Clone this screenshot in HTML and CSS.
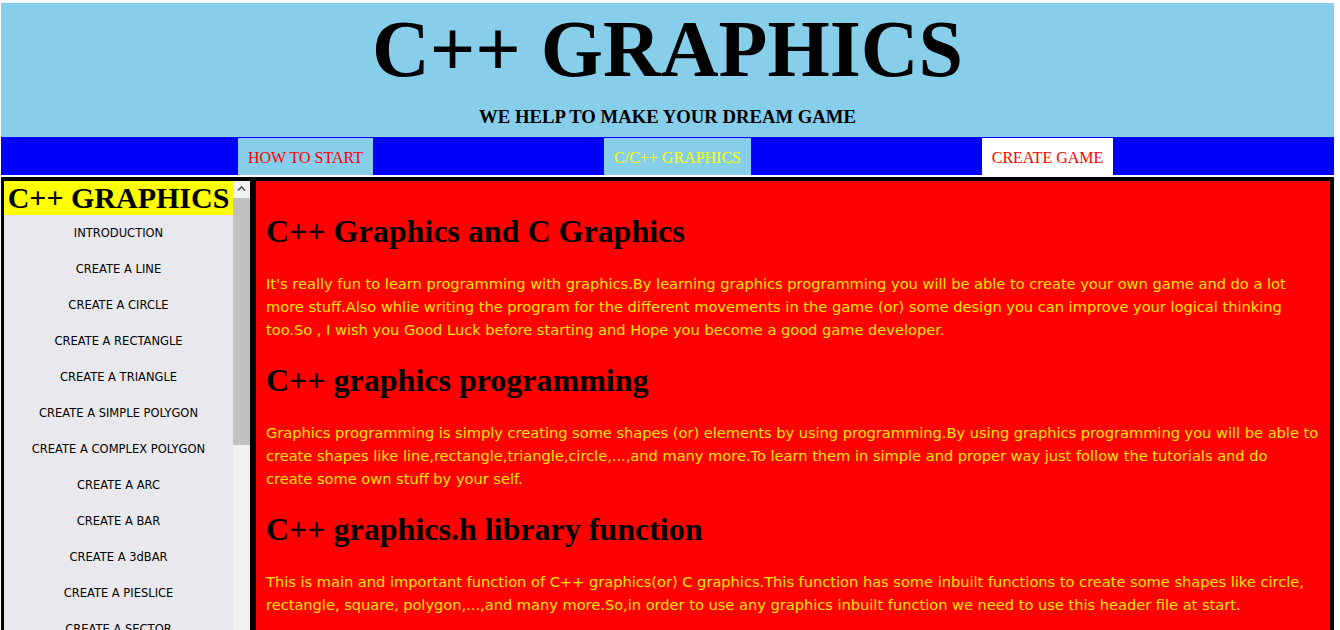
FILE: index.html
```html
<!DOCTYPE html>
<html lang="en">
<head>
<meta charset="utf-8">
<title>C++ GRAPHICS</title>
<link rel="stylesheet" href="styles.css">
</head>
<body>
<header class="top">
  <h1 class="title">C++ GRAPHICS</h1>
  <h3 class="tagline">WE HELP TO MAKE YOUR DREAM GAME</h3>
</header>
<nav class="nav">
  <a class="nav-item nav-start" href="#">HOW TO START</a>
  <a class="nav-item nav-graphics" href="#">C/C++ GRAPHICS</a>
  <a class="nav-item nav-game" href="#">CREATE GAME</a>
</nav>
<div class="layout">
  <aside class="side">
    <div class="side-list">
      <h2 class="side-title">C++ GRAPHICS</h2>
      <ul class="menu">
        <li>INTRODUCTION</li>
        <li>CREATE A LINE</li>
        <li>CREATE A CIRCLE</li>
        <li>CREATE A RECTANGLE</li>
        <li>CREATE A TRIANGLE</li>
        <li>CREATE A SIMPLE POLYGON</li>
        <li>CREATE A COMPLEX POLYGON</li>
        <li>CREATE A ARC</li>
        <li>CREATE A BAR</li>
        <li>CREATE A 3dBAR</li>
        <li>CREATE A PIESLICE</li>
        <li>CREATE A SECTOR</li>
        <li>CREATE A ELLIPSE</li>
      </ul>
    </div>
    <div class="scrollbar">
      <div class="sb-btn">
        <svg width="17" height="17" viewBox="0 0 17 17"><polyline points="5,9.5 8.5,6 12,9.5" fill="none" stroke="#505050" stroke-width="1.6"/></svg>
      </div>
      <div class="sb-thumb"></div>
      <div class="sb-track"></div>
    </div>
  </aside>
  <main class="content">
    <h1 class="head">C++ Graphics and C Graphics</h1>
    <p class="text">It's really fun to learn programming with graphics.By learning graphics programming you will be able to create your own game and do a lot<br>more stuff.Also whlie writing the program for the different movements in the game (or) some design you can improve your logical thinking<br>too.So , I wish you Good Luck before starting and Hope you become a good game developer.</p>
    <h1 class="head">C++ graphics programming</h1>
    <p class="text">Graphics programming is simply creating some shapes (or) elements by using programming.By using graphics programming you will be able to<br>create shapes like line,rectangle,triangle,circle,...,and many more.To learn them in simple and proper way just follow the tutorials and do<br>create some own stuff by your self.</p>
    <h1 class="head">C++ graphics.h library function</h1>
    <p class="text">This is main and important function of C++ graphics(or) C graphics.This function has some inbuilt functions to create some shapes like circle,<br>rectangle, square, polygon,...,and many more.So,in order to use any graphics inbuilt function we need to use this header file at start.</p>
  </main>
</div>
</body>
</html>
```
FILE: styles.css
```css
html {
  overflow: hidden;
}
body {
  margin: 3px 6px 0 1px;
  font-family: "Liberation Serif", "Times New Roman", serif;
  background: #ffffff;
}
.top {
  background: #87ceeb;
  text-align: center;
  padding: 0 0 10px;
}
.title {
  margin: 0;
  font-size: 80px;
  font-weight: bold;
  line-height: 92px;
  color: #000;
}
.tagline {
  margin: 11px 0 0;
  font-size: 18.72px;
  line-height: 21px;
  font-weight: bold;
  color: #000;
}
.nav {
  background: #0000ff;
  display: flex;
  height: 38px;
  padding: 1px 0 0 237px;
  box-sizing: border-box;
  gap: 231px;
}
.nav-item {
  display: flex;
  align-items: center;
  justify-content: center;
  height: 37px;
  padding-top: 2px;
  box-sizing: border-box;
  font-size: 16px;
  text-decoration: none;
  color: #ff0000;
}
.nav-start {
  width: 135px;
  background: #87ceeb;
}
.nav-graphics {
  width: 147px;
  background: #87ceeb;
  color: #ffff00;
}
.nav-game {
  width: 131px;
  background: #ffffff;
}
.layout {
  display: flex;
  margin-top: 2px;
  height: 800px;
}
.side {
  width: 246px;
  flex: none;
  display: flex;
  border-style: solid;
  border-color: #000;
  border-width: 4px 3px 0 3px;
  background: #e9e9ed;
}
.side-list {
  width: 229px;
}
.side-title {
  margin: 0;
  background: #ffff00;
  font-size: 30px;
  line-height: 34px;
  text-align: center;
  font-weight: bold;
  color: #000;
}
.menu {
  list-style: none;
  margin: 0;
  padding: 0;
}
.menu li {
  font-family: "DejaVu Sans", Verdana, sans-serif;
  font-size: 11.5px;
  line-height: 16px;
  padding: 10px 0;
  text-align: center;
  color: #000;
}
.scrollbar {
  width: 17px;
  display: flex;
  flex-direction: column;
  background: #f1f1f1;
}
.sb-btn {
  height: 17px;
}
.sb-btn svg {
  display: block;
}
.sb-thumb {
  height: 247px;
  background: #c1c1c1;
}
.sb-track {
  flex: 1;
}
.content {
  flex: 1;
  background: #ff0000;
  border-style: solid;
  border-color: #000;
  border-width: 4px 4px 0 3px;
  padding: 11px 10px 10px;
}
.head {
  font-size: 32px;
  font-weight: bold;
  margin: 21.44px 0;
  line-height: 37px;
  color: #000;
}
.text {
  font-family: "DejaVu Sans", sans-serif;
  font-size: 14.6px;
  line-height: 23px;
  margin: 16px 0;
  color: #ffe600;
  white-space: nowrap;
}
```
